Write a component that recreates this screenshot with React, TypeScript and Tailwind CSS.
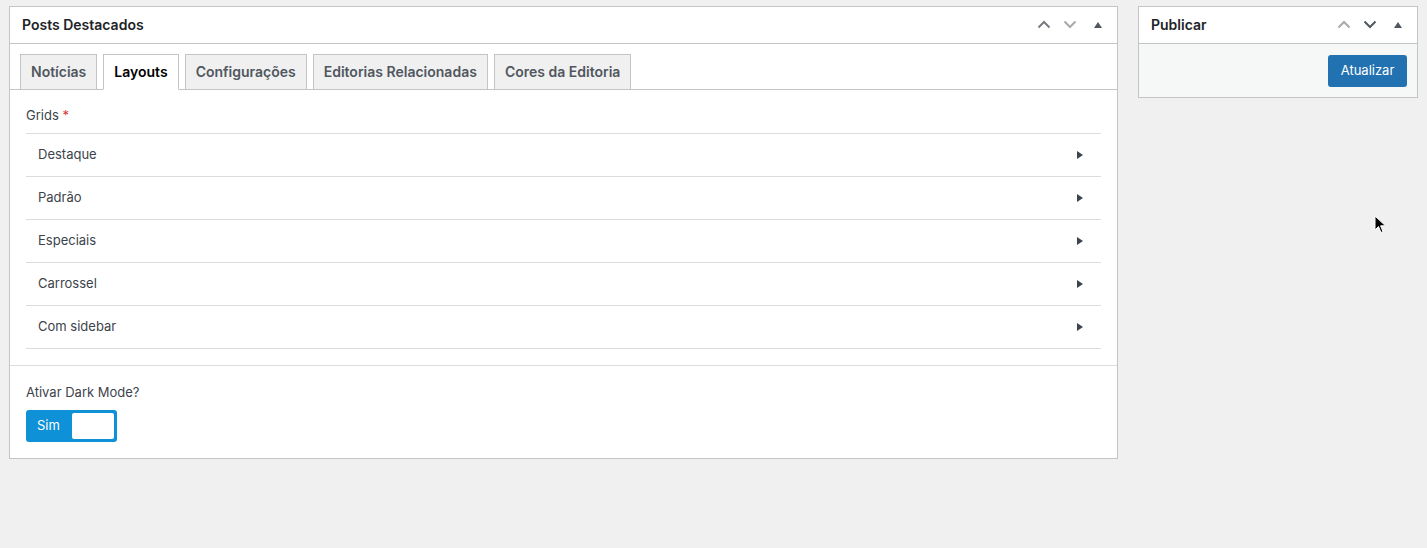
import { ReactNode } from 'react'

const font = { fontFamily: 'Inter, "Noto Sans", "Liberation Sans", sans-serif' }

function Chevron({ up, color }: { up?: boolean; color: string }) {
  return (
    <svg width="14" height="9" viewBox="0 0 14 9" fill="none">
      <path
        d={up ? 'M1.5 7.5 L7 2 L12.5 7.5' : 'M1.5 1.5 L7 7 L12.5 1.5'}
        stroke={color}
        strokeWidth="2"
      />
    </svg>
  )
}

function Triangle() {
  return (
    <svg width="8" height="6" viewBox="0 0 8 6">
      <path d="M4 0 L8 6 L0 6 Z" fill="#50575e" />
    </svg>
  )
}

function PanelHeader({ title, upColor, downColor }: { title: string; upColor: string; downColor: string }) {
  return (
    <div className="flex h-[37px] items-center justify-between border-b border-[#c3c4c7] pb-[1px] pl-[12px] pr-[14px]">
      <h2 className="text-[14px] font-semibold text-[#1d2327]">{title}</h2>
      <div className="flex items-center">
        <span className="flex w-[26px] justify-center"><Chevron up color={upColor} /></span>
        <span className="flex w-[26px] justify-center"><Chevron color={downColor} /></span>
        <span className="ml-[10px] flex w-[10px] justify-center"><Triangle /></span>
      </div>
    </div>
  )
}

function Tab({ children, active }: { children: ReactNode; active?: boolean }) {
  return (
    <div
      className={
        active
          ? 'mb-[-1px] flex h-[36px] items-center border border-[#c3c4c7] border-b-white bg-white px-[10px] pb-[1px] text-[14px] font-semibold text-black'
          : 'mb-[-1px] flex h-[36px] items-center border border-[#c3c4c7] bg-[#f0f0f1] px-[10px] pb-[1px] text-[14px] font-semibold text-[#50575e]'
      }
    >
      {children}
    </div>
  )
}

const grids = ['Destaque', 'Padrão', 'Especiais', 'Carrossel', 'Com sidebar']

export default function App() {
  return (
    <div className="relative min-h-screen bg-[#f0f0f1] text-[#3c434a]" style={font}>
      <div className="flex items-start gap-[20px] px-[9px] pt-[6px]">
        <div className="flex-1 border border-[#c3c4c7] bg-white">
          <PanelHeader title="Posts Destacados" upColor="#787c82" downColor="#a7aaad" />
          <div className="flex gap-[6px] border-b border-[#c3c4c7] pl-[10px] pt-[10px]">
            <Tab>Notícias</Tab>
            <Tab active>Layouts</Tab>
            <Tab>Configurações</Tab>
            <Tab>Editorias Relacionadas</Tab>
            <Tab>Cores da Editoria</Tab>
          </div>
          <div className="px-[16px] pb-[16px] pt-[17px]">
            <div className="mb-[10px] text-[13px] leading-[16px] text-[#3c434a]">
              Grids <span className="text-[#d63638]">*</span>
            </div>
            <div className="border-t border-[#dcdcde]">
              {grids.map((g) => (
                <div
                  key={g}
                  className="flex h-[43px] items-center justify-between border-b border-[#dcdcde] pl-[12px] pr-[18px] text-[13px] text-[#3c434a]"
                >
                  <span>{g}</span>
                  <svg width="6" height="8" viewBox="0 0 6 8">
                    <path d="M0 0 L6 4 L0 8 Z" fill="#3c434a" />
                  </svg>
                </div>
              ))}
            </div>
          </div>
          <div className="border-t border-[#dcdcde] px-[16px] pb-[16px] pt-[18px]">
            <div className="mb-[10px] text-[13px] leading-[16px] text-[#3c434a]">Ativar Dark Mode?</div>
            <div className="flex h-[32px] w-[91px] items-center rounded-[3px] bg-[#0e91d6] pl-[11px] pr-[3px]">
              <span className="text-[13px] text-white">Sim</span>
              <span className="ml-auto h-[26px] w-[42px] rounded-[2px] bg-white" />
            </div>
          </div>
        </div>

        <div className="w-[280px] border border-[#c3c4c7] bg-white">
          <PanelHeader title="Publicar" upColor="#a7aaad" downColor="#50575e" />
          <div className="flex justify-end bg-[#f6f7f7] px-[10px] pb-[10px] pt-[11px]">
            <button className="h-[32px] w-[79px] rounded-[3px] bg-[#2271b1] text-[13px] text-white">
              Atualizar
            </button>
          </div>
        </div>
      </div>

      <svg className="absolute left-[1374px] top-[215px]" width="13" height="19" viewBox="0 0 13 19">
        <path d="M1 1 L1 15 L4.5 11.5 L7 17.5 L9 16.6 L6.6 10.8 L11.5 10.8 Z" fill="#000" stroke="#fff" strokeWidth="1" />
      </svg>
    </div>
  )
}
